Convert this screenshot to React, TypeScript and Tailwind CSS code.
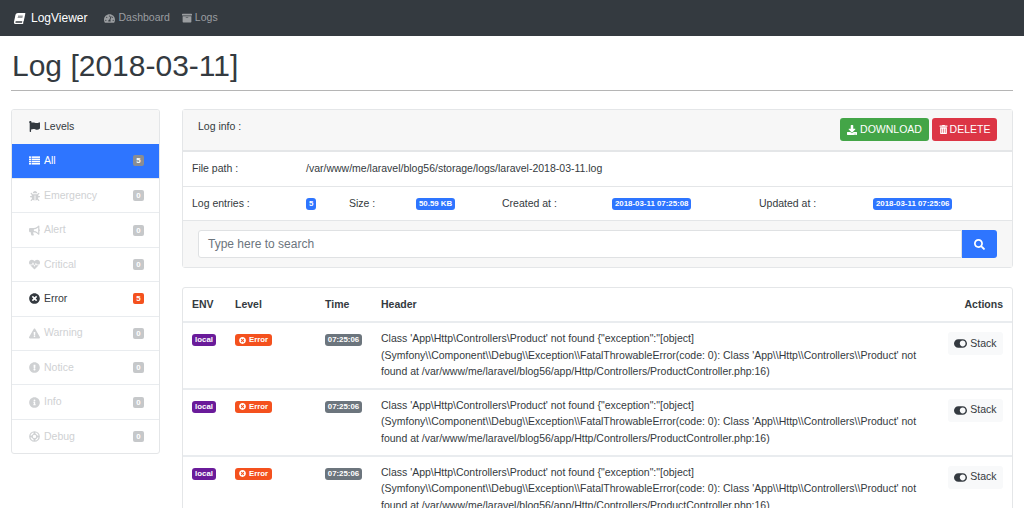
import React from 'react';
import {
  FaBook, FaTachometerAlt, FaArchive, FaFlag, FaBug, FaBullhorn, FaHeartbeat,
  FaTimesCircle, FaExclamationTriangle, FaExclamationCircle, FaInfoCircle,
  FaDownload, FaTrashAlt, FaSearch, FaToggleOn,
} from 'react-icons/fa';

type IconProps = { className?: string };

// FA4 list: four rows, small square on the left
const ListIcon = ({ className }: IconProps) => (
  <svg viewBox="0 0 12 10" fill="currentColor" className={className}>
    <rect x="0" y="0.5" width="2.4" height="1.7" />
    <rect x="3" y="0.5" width="9" height="1.7" />
    <rect x="0" y="2.9" width="2.4" height="1.7" />
    <rect x="3" y="2.9" width="9" height="1.7" />
    <rect x="0" y="5.3" width="2.4" height="1.7" />
    <rect x="3" y="5.3" width="9" height="1.7" />
    <rect x="0" y="7.7" width="2.4" height="1.7" />
    <rect x="3" y="7.7" width="9" height="1.7" />
  </svg>
);

const LifeRingIcon = ({ className }: IconProps) => (
  <svg viewBox="0 0 12 12" fill="none" stroke="currentColor" className={className}>
    <circle cx="6" cy="6" r="5.2" strokeWidth="1.3" />
    <circle cx="6" cy="6" r="2.5" strokeWidth="1.2" />
    <path d="M6 1v2.5M6 8.5V11M1 6h2.5M8.5 6H11" strokeWidth="2.2" />
  </svg>
);

const levels = [
  { name: 'Emergency', icon: FaBug, count: 0, size: 'size-[10px] mx-[0.5px]' },
  { name: 'Alert', icon: FaBullhorn, count: 0, size: 'size-[11px]' },
  { name: 'Critical', icon: FaHeartbeat, count: 0, size: 'size-[11px]' },
  { name: 'Error', icon: FaTimesCircle, count: 5, size: 'size-[11px]' },
  { name: 'Warning', icon: FaExclamationTriangle, count: 0, size: 'size-[11px]' },
  { name: 'Notice', icon: FaExclamationCircle, count: 0, size: 'size-[11px]' },
  { name: 'Info', icon: FaInfoCircle, count: 0, size: 'size-[11px]' },
  { name: 'Debug', icon: LifeRingIcon, count: 0, size: 'size-[11px]' },
];

const Pill = ({ children }: { children: React.ReactNode }) => (
  <span className="inline-block rounded-[3px] bg-[#2e75ff] px-[3px] text-[7.875px] font-bold leading-[12px] text-white">{children}</span>
);

const LogRow = () => (
  <div className="flex h-[66.8px] border-t-2 border-[#e9ecef] pl-[9px] pr-[9px] pt-[7px]">
    <div className="w-[43px] pt-[4px]">
      <span className="block w-[24px] rounded-[3px] bg-[#6a1b9a] text-center text-[7.875px] font-bold leading-[12px] text-white">local</span>
    </div>
    <div className="w-[90px] pt-[4px]">
      <span className="flex h-[12px] w-[37px] items-center justify-center gap-[3px] rounded-[3px] bg-[#f4511e] text-[7.875px] font-bold text-white">
        <FaTimesCircle className="size-[7px]" />Error
      </span>
    </div>
    <div className="w-[56px] pt-[4px]">
      <span className="block w-[37px] rounded-[3px] bg-[#6c757d] text-center text-[7.875px] font-bold leading-[12px] text-white">07:25:06</span>
    </div>
    <div className="w-[567px] text-[10.5px] leading-[16.5px] text-[#343a40]">
      <p>Class 'App\Http\Controllers\Product' not found {'{'}"exception":"[object]</p>
      <p>(Symfony\\Component\\Debug\\Exception\\FatalThrowableError(code: 0): Class 'App\\Http\\Controllers\\Product' not</p>
      <p>found at /var/www/me/laravel/blog56/app/Http/Controllers/ProductController.php:16)</p>
    </div>
    <div className="ml-auto pt-[2px]">
      <button className="flex h-[23px] w-[55px] items-center justify-center gap-[3px] rounded-[3px] bg-[#f8f9fa] text-[10.5px] text-[#343a40]">
        <FaToggleOn className="size-[13px]" />Stack
      </button>
    </div>
  </div>
);

export default function App() {
  return (
    <div className="h-[508px] overflow-hidden bg-white font-['Liberation_Sans',Arial,sans-serif] text-[10.5px] text-[#343a40]">
      <nav className="flex h-[36px] items-center bg-[#343a40] pl-[14px]">
        <span className="flex items-center gap-[6px] text-[12px] text-white">
          <FaBook className="size-[11px] -skew-x-12" />LogViewer
        </span>
        <span className="ml-[17px] flex items-center gap-[3px] text-[#9a9da0]">
          <FaTachometerAlt className="size-[11px]" />Dashboard
        </span>
        <span className="ml-[12px] flex items-center gap-[3px] text-[#9a9da0]">
          <FaArchive className="size-[10px]" />Logs
        </span>
      </nav>

      <div className="px-[11px]">
        <h1 className="h-[55px] border-b border-[#b5b5b5] pt-[12px] pl-px text-[30px] leading-[36px] text-[#343a40]">Log [2018-03-11]</h1>

        <div className="mt-[18px] flex items-start gap-[22px]">
          <aside className="w-[149px] shrink-0 overflow-hidden rounded-[3px] border border-[#e4e6e8]">
            <div className="flex h-[33.5px] items-center gap-[4px] bg-[#f7f7f7] pl-[17px] text-[#343a40]">
              <FaFlag className="size-[11px]" />Levels
            </div>
            <div className="flex h-[34.5px] items-center gap-[4px] bg-[#2e75ff] pl-[17px] pr-[15px] text-white">
              <ListIcon className="size-[11px]" />All
              <span className="ml-auto w-[11px] rounded-[2px] bg-[#8a8d91] text-center text-[7.875px] font-bold leading-[11px]">5</span>
            </div>
            {levels.map((l) => {
              const on = l.count > 0;
              const Icon = l.icon;
              return (
                <div key={l.name} className={`flex h-[34.4px] items-center gap-[4px] border-t border-[#e9ecef] pl-[17px] pr-[15px] ${on ? 'text-[#343a40]' : 'text-[#cfd1d3]'}`}>
                  <Icon className={l.size} />{l.name}
                  <span className={`ml-auto w-[11px] rounded-[2px] text-center text-[7.875px] font-bold leading-[11px] text-white ${on ? 'bg-[#f4511e]' : 'bg-[#c6c8ca]'}`}>{l.count}</span>
                </div>
              );
            })}
          </aside>

          <main className="min-w-0 flex-1">
            <section className="h-[159px] rounded-[3px] border border-[#e4e6e8]">
              <div className="flex h-[42px] justify-between border-b-2 border-[#e4e6e8] bg-[#f7f7f7] pl-[15px] pr-[15px] pt-[8px]">
                <span className="leading-[17px]">Log info :</span>
                <div className="flex gap-[3px]">
                  <button className="flex h-[23px] w-[89px] items-center justify-center gap-[3px] rounded-[3px] bg-[#43a547] text-[10.5px] text-white">
                    <FaDownload className="size-[10px]" />DOWNLOAD
                  </button>
                  <button className="flex h-[23px] w-[65px] items-center justify-center gap-[2px] rounded-[3px] bg-[#dc3545] text-[10.5px] text-white">
                    <FaTrashAlt className="size-[9px]" />DELETE
                  </button>
                </div>
              </div>
              <div className="flex h-[34px] items-center pl-[9px]">
                <span className="w-[114px]">File path :</span>
                <span>/var/www/me/laravel/blog56/storage/logs/laravel-2018-03-11.log</span>
              </div>
              <div className="flex h-[34px] items-center border-t border-[#e4e6e8] pl-[9px]">
                <span className="w-[114px]">Log entries :</span>
                <span className="flex w-[43px]"><Pill>5</Pill></span>
                <span className="w-[67px]">Size :</span>
                <span className="flex w-[86px]"><Pill>50.59 KB</Pill></span>
                <span className="w-[110px]">Created at :</span>
                <span className="flex w-[147px]"><Pill>2018-03-11 07:25:08</Pill></span>
                <span className="w-[114px]">Updated at :</span>
                <span className="flex"><Pill>2018-03-11 07:25:06</Pill></span>
              </div>
              <div className="flex h-[47px] items-start border-t border-[#e4e6e8] bg-[#f7f7f7] px-[15px] pt-[9px]">
                <div className="flex h-[28px] flex-1 items-center rounded-l-[3px] border border-[#dfe1e3] bg-white pl-[9px] text-[12px] text-[#6c757d]">Type here to search</div>
                <div className="flex h-[28px] w-[35px] items-center justify-center rounded-r-[3px] bg-[#2e75ff] text-white">
                  <FaSearch className="size-[11px]" />
                </div>
              </div>
            </section>

            <section className="mt-[19px] rounded-[3px] border border-[#e4e6e8]">
              <div className="flex h-[33px] items-center pl-[9px] pr-[9px] font-bold">
                <span className="w-[43px]">ENV</span>
                <span className="w-[90px]">Level</span>
                <span className="w-[56px]">Time</span>
                <span>Header</span>
                <span className="ml-auto">Actions</span>
              </div>
              <LogRow />
              <LogRow />
              <LogRow />
            </section>
          </main>
        </div>
      </div>
    </div>
  );
}
